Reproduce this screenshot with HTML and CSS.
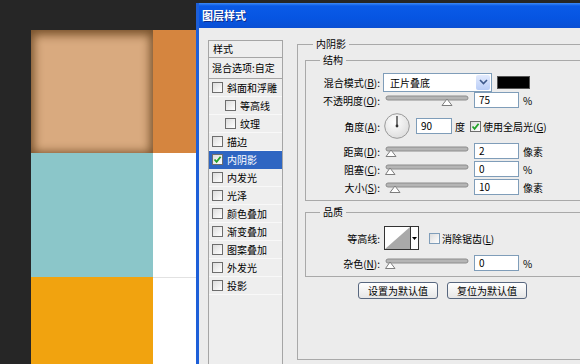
FILE: index.html
```html
<!DOCTYPE html>
<html lang="zh-CN">
<head>
  <meta charset="UTF-8">
  <meta name="viewport" content="width=device-width, initial-scale=1.0">
<link rel="stylesheet" href="styles.css">
  <title>图层样式</title>
</head>
<body>
  <div class="canvas">
    <div class="tiles">
      <div class="tan"></div>
      <div class="orange"></div>
      <div class="teal"></div>
      <div class="white"></div>
      <div class="yellow"></div>
      <div class="white low"></div>
    </div>
  </div>

  <div class="dialog">
    <div class="titlebar">图层样式</div>
    <div class="dialog-body">

      <div class="style-list">
        <div class="list-head">样式</div>
        <div class="list-blend">混合选项:自定</div>
        <div class="list-item"><span class="cb"></span>斜面和浮雕</div>
        <div class="list-item sub"><span class="cb"></span>等高线</div>
        <div class="list-item sub"><span class="cb"></span>纹理</div>
        <div class="list-item"><span class="cb"></span>描边</div>
        <div class="list-item selected">
          <span class="cb"><svg width="9" height="9" viewBox="0 0 9 9"><path d="M1.5 4.5 L3.6 6.8 L7.6 1.8" fill="none" stroke="#22a229" stroke-width="1.8"/></svg></span>内阴影
        </div>
        <div class="list-item"><span class="cb"></span>内发光</div>
        <div class="list-item"><span class="cb"></span>光泽</div>
        <div class="list-item"><span class="cb"></span>颜色叠加</div>
        <div class="list-item"><span class="cb"></span>渐变叠加</div>
        <div class="list-item"><span class="cb"></span>图案叠加</div>
        <div class="list-item"><span class="cb"></span>外发光</div>
        <div class="list-item"><span class="cb"></span>投影</div>
      </div>

      <div class="settings">
        <fieldset class="group outer">
          <legend>内阴影</legend>

          <fieldset class="group">
            <legend>结构</legend>

            <div class="row row-blend">
              <span class="lbl">混合模式(<u>B</u>):</span>
              <div class="select">
                <span class="select-text">正片叠底</span>
                <span class="select-btn"><svg width="9" height="6" viewBox="0 0 9 6"><path d="M1 1 L4.5 4.5 L8 1" fill="none" stroke="#3e5a8c" stroke-width="1.6"/></svg></span>
              </div>
              <span class="swatch"></span>
            </div>

            <div class="row row-slider">
              <span class="lbl">不透明度(<u>O</u>):</span>
              <svg class="slider" width="84" height="16" viewBox="0 0 84 16">
                <rect x="1" y="4" width="82" height="4" rx="2" fill="#b5b5b5" stroke="#8c8c8c"/>
                <polygon points="57,13.5 62,7 67,13.5" fill="#fff" stroke="#7d7d7d"/>
              </svg>
              <span class="field">75</span>
              <span class="unit">%</span>
            </div>

            <div class="row row-angle">
              <span class="lbl">角度(<u>A</u>):</span>
              <svg class="dial" width="26" height="26" viewBox="0 0 26 26">
                <defs>
                  <radialGradient id="dialFill" cx="0.4" cy="0.35" r="0.7">
                    <stop offset="0" stop-color="#ffffff"/>
                    <stop offset="1" stop-color="#dcdcdc"/>
                  </radialGradient>
                </defs>
                <circle cx="13" cy="13" r="12.3" fill="url(#dialFill)" stroke="#9a9a9a"/>
                <line x1="13" y1="13" x2="13" y2="3" stroke="#333" stroke-width="1.3"/>
                <circle cx="13" cy="13" r="1.4" fill="#333"/>
              </svg>
              <span class="field short">90</span>
              <span class="unit deg">度</span>
              <span class="cb"><svg width="9" height="9" viewBox="0 0 9 9"><path d="M1.5 4.5 L3.6 6.8 L7.6 1.8" fill="none" stroke="#22a229" stroke-width="1.8"/></svg></span>
              <span class="cb-text">使用全局光(<u>G</u>)</span>
            </div>

            <div class="row row-slider gap4">
              <span class="lbl">距离(<u>D</u>):</span>
              <svg class="slider" width="84" height="16" viewBox="0 0 84 16">
                <rect x="1" y="4" width="82" height="4" rx="2" fill="#b5b5b5" stroke="#8c8c8c"/>
                <polygon points="1,13.5 6,7 11,13.5" fill="#fff" stroke="#7d7d7d"/>
              </svg>
              <span class="field">2</span>
              <span class="unit">像素</span>
            </div>

            <div class="row row-slider gap2">
              <span class="lbl">阻塞(<u>C</u>):</span>
              <svg class="slider" width="84" height="16" viewBox="0 0 84 16">
                <rect x="1" y="4" width="82" height="4" rx="2" fill="#b5b5b5" stroke="#8c8c8c"/>
                <polygon points="0.5,13.5 5,7 10,13.5" fill="#fff" stroke="#7d7d7d"/>
              </svg>
              <span class="field">0</span>
              <span class="unit">%</span>
            </div>

            <div class="row row-slider gap2">
              <span class="lbl">大小(<u>S</u>):</span>
              <svg class="slider" width="84" height="16" viewBox="0 0 84 16">
                <rect x="1" y="4" width="82" height="4" rx="2" fill="#b5b5b5" stroke="#8c8c8c"/>
                <polygon points="5,13.5 10,7 15,13.5" fill="#fff" stroke="#7d7d7d"/>
              </svg>
              <span class="field">10</span>
              <span class="unit">像素</span>
            </div>
          </fieldset>

          <fieldset class="group quality">
            <legend>品质</legend>

            <div class="row row-contour">
              <span class="lbl">等高线:</span>
              <div class="contour">
                <svg width="25" height="22" viewBox="0 0 25 22">
                  <rect width="25" height="22" fill="#fff"/>
                  <polygon points="0,22 25,0 25,22" fill="#a9a9a9"/>
                </svg>
                <span class="contour-btn"><svg width="5" height="3" viewBox="0 0 5 3"><polygon points="0,0 5,0 2.5,3" fill="#000"/></svg></span>
              </div>
              <span class="cb cb-aa"></span>
              <span class="cb-text">消除锯齿(<u>L</u>)</span>
            </div>

            <div class="row row-slider row-noise">
              <span class="lbl">杂色(<u>N</u>):</span>
              <svg class="slider" width="84" height="16" viewBox="0 0 84 16">
                <rect x="1" y="4" width="82" height="4" rx="2" fill="#b5b5b5" stroke="#8c8c8c"/>
                <polygon points="0.5,13.5 5,7 10,13.5" fill="#fff" stroke="#7d7d7d"/>
              </svg>
              <span class="field">0</span>
              <span class="unit">%</span>
            </div>
          </fieldset>

          <div class="buttons">
            <button>设置为默认值</button>
            <button>复位为默认值</button>
          </div>
        </fieldset>
      </div>

    </div>
  </div>
</body>
</html>
```

FILE: styles.css
```css
  * {
    box-sizing: border-box;
  }

  html, body {
    margin: 0;
    height: 364px;
    overflow: hidden;
  }

  body {
    display: flex;
    background-color: #262626;
    font-family: "Noto Sans CJK SC", "Noto Sans", sans-serif;
    font-size: 10px;
    color: #000;
  }

  /* canvas behind the dialog */
  .canvas {
    flex: none;
    width: 196px;
    padding: 30px 0 0 31px;
  }

  .tiles {
    display: grid;
    grid-template-columns: 122px 43px;
    grid-template-rows: 123px 124px 90px;
  }

  .tan {
    background-color: #d9aa7f;
    box-shadow: inset 0 2px 10px 3px rgba(80, 45, 10, 0.7);
  }

  .orange {
    background-color: #d5853f;
  }

  .teal {
    background-color: #8bc6c9;
  }

  .white {
    background-color: #fff;
  }

  .white.low {
    border-top: 1px solid #e2e2e2;
  }

  .yellow {
    background-color: #f1a30f;
  }

  /* dialog */
  .dialog {
    flex: 1;
    min-width: 0;
    margin-top: 3px;
    border-left: 3px solid #1d5fd8;
    background-color: #ececec;
    display: flex;
    flex-direction: column;
    overflow: hidden;
  }

  .titlebar {
    flex: none;
    height: 25px;
    line-height: 25px;
    padding-left: 3px;
    background: linear-gradient(#3d8af7 0, #0a5ae8 3px, #0655e2 60%, #0a4fd3 100%);
    color: #fff;
    font-size: 11px;
    font-weight: bold;
    text-shadow: 1px 1px 0 #0b2a8a;
  }

  .dialog-body {
    flex: 1;
    min-height: 0;
    display: flex;
    align-items: flex-start;
  }

  /* style list on the left */
  .style-list {
    flex: none;
    width: 75px;
    height: 400px;
    margin: 12px 0 0 9px;
    border: 1px solid #a5a5a5;
    background-color: #eeeeee;
  }

  .list-head {
    height: 17px;
    line-height: 16px;
    padding-left: 4px;
    border-bottom: 1px solid #a5a5a5;
  }

  .list-blend {
    height: 21px;
    line-height: 20px;
    padding-left: 3px;
    border-bottom: 1px solid #a5a5a5;
    white-space: nowrap;
  }

  .list-item {
    height: 18px;
    display: flex;
    align-items: center;
    padding-left: 3px;
    border-bottom: 1px solid #f8f8f8;
    white-space: nowrap;
  }

  .list-item.sub {
    padding-left: 16px;
  }

  .list-item.selected {
    background-color: #2f66c2;
    color: #fff;
    border-bottom-color: #2f66c2;
  }

  .cb {
    flex: none;
    width: 11px;
    height: 11px;
    margin-right: 4px;
    border: 1px solid #6d6d6d;
    background: linear-gradient(135deg, #dcdcdc, #ffffff);
    display: flex;
    align-items: center;
    justify-content: center;
  }

  .cb svg {
    display: block;
  }

  /* settings on the right */
  .settings {
    flex: none;
    width: 320px;
    margin: 9px 0 0 14px;
  }

  .group {
    margin: 0;
    padding: 0;
    min-width: 0;
    border: 1px solid #a9a9a9;
  }

  .group legend {
    margin-left: 14px;
    padding: 0 3px;
    line-height: 14px;
  }

  .outer {
    padding: 2px 0 60px 7px;
  }

  .outer > legend {
    margin-left: 8px;
  }

  .quality {
    margin-top: 4px;
  }

  .row {
    display: flex;
    align-items: center;
    white-space: nowrap;
  }

  .lbl {
    flex: none;
    width: 74px;
    text-align: right;
  }

  .row-blend {
    height: 20px;
    margin-top: 5px;
  }

  .select {
    width: 109px;
    height: 19px;
    margin-left: 3px;
    border: 1px solid #7f9db9;
    background-color: #fff;
    display: flex;
  }

  .select-text {
    flex: 1;
    padding-left: 6px;
    line-height: 17px;
  }

  .select-btn {
    width: 14px;
    margin: 1px;
    border-radius: 2px;
    background: linear-gradient(#e3ebfd, #b9cdf7);
    display: flex;
    align-items: center;
    justify-content: center;
  }

  .swatch {
    width: 33px;
    height: 13px;
    margin-left: 5px;
    background-color: #000;
    border: 1px solid #555;
  }

  .row-slider {
    height: 16px;
  }

  .gap4 {
    margin-top: 4px;
  }

  .gap2 {
    margin-top: 2px;
  }

  .slider {
    flex: none;
    margin-left: 5px;
    display: block;
  }

  .field {
    width: 45px;
    height: 16px;
    margin-left: 5px;
    padding-left: 4px;
    line-height: 14px;
    border: 1px solid #7f9db9;
    background-color: #fff;
  }

  .field.short {
    width: 36px;
    margin-left: 6px;
  }

  .unit {
    margin-left: 4px;
  }

  .unit.deg {
    margin-left: 3px;
    margin-right: 5px;
  }

  .row-angle {
    height: 26px;
    margin-top: 5px;
  }

  .row-angle .cb {
    margin-right: 2px;
  }

  .dial {
    flex: none;
    margin-left: 4px;
    display: block;
  }

  .fieldset-end {
    height: 5px;
  }

  .group:not(.outer) {
    padding-bottom: 5px;
  }

  .row-contour {
    height: 24px;
    margin-top: 7px;
  }

  .contour {
    display: flex;
    width: 35px;
    height: 24px;
    margin-left: 4px;
    border: 1px solid #333;
    background-color: #fff;
  }

  .contour svg {
    display: block;
  }

  .contour-btn {
    flex: 1;
    border-left: 1px solid #333;
    display: flex;
    align-items: center;
    justify-content: center;
  }

  .cb-aa {
    margin-left: 10px;
    margin-right: 2px;
    border-color: #7f9db9;
  }

  .row-noise {
    margin-top: 5px;
  }

  .buttons {
    margin: 5px 0 0 53px;
    display: flex;
    gap: 9px;
  }

  .buttons button {
    width: 80px;
    height: 17px;
    padding: 0;
    border: 1px solid #58677f;
    border-radius: 3px;
    background: linear-gradient(#ffffff, #e6e6e6);
    font-family: "Noto Sans CJK SC", "Noto Sans", sans-serif;
    font-size: 10px;
    line-height: 15px;
    color: #000;
  }
```
